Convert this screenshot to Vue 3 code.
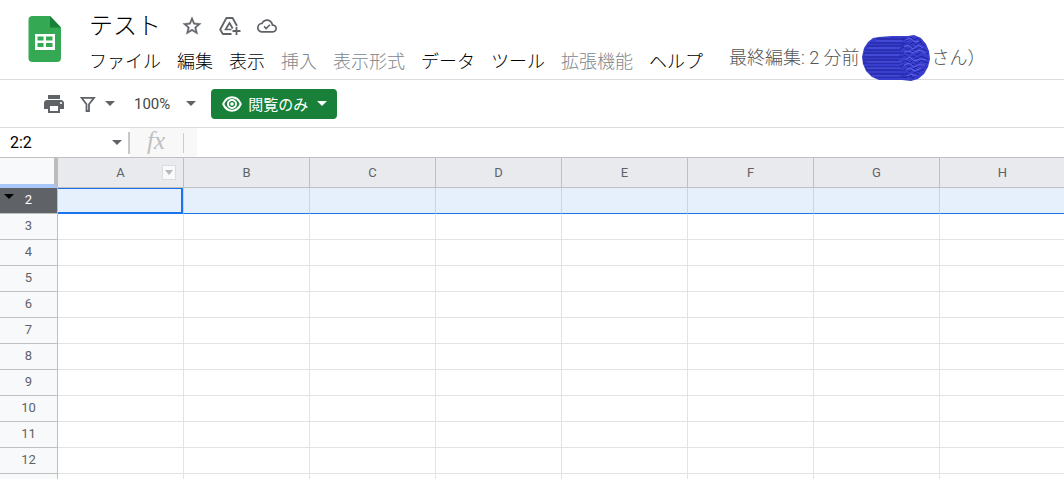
<script setup>
const menus = [
  { label: 'ファイル' },
  { label: '編集' },
  { label: '表示' },
  { label: '挿入', disabled: true },
  { label: '表示形式', disabled: true },
  { label: 'データ' },
  { label: 'ツール' },
  { label: '拡張機能', disabled: true },
  { label: 'ヘルプ' },
]
const columns = ['A', 'B', 'C', 'D', 'E', 'F', 'G', 'H']
const rows = [3, 4, 5, 6, 7, 8, 9, 10, 11, 12, '']
</script>

<template>
  <div class="app">
    <header class="top">
      <a class="logo" href="#" aria-label="Sheets">
        <svg width="34" height="46" viewBox="0 0 34 46">
          <path d="M4.500 0h17.500l11 11.500V42a4 4 0 0 1-4 4H4.500a4 4 0 0 1-4-4V4a4 4 0 0 1 4-4z" fill="#34a853" />
          <path d="M22 0l11 11.500H22z" fill="#188038" />
          <path fill-rule="evenodd" d="M7 18h20v16H7zM9.500 20.500v4h6v-4zm8.500 0v4h6.500v-4zM9.500 27v4h6v-4zm8.500 0v4h6.500v-4z" fill="#fff" />
        </svg>
      </a>
      <div class="head">
        <div class="title-row">
          <h1>テスト</h1>
          <button class="icon" aria-label="star">
            <svg width="22" height="22" viewBox="0 0 24 24"><path fill="#5f6368" stroke="#5f6368" stroke-width=".4" d="M22 9.240l-7.190-.62L12 2 9.190 8.630 2 9.240l5.460 4.730L5.820 21 12 17.270 18.180 21l-1.630-7.030L22 9.240zM12 15.400l-3.760 2.270 1-4.280-3.320-2.880 4.380-.38L12 6.100l1.710 4.040 4.380.38-3.320 2.880 1 4.280L12 15.400z" /></svg>
          </button>
          <button class="icon" aria-label="drive">
            <svg width="22" height="22" viewBox="0 0 22 22" fill="none" stroke="#5f6368" stroke-width="1.800">
              <path d="M12.500 19H3.800L1.200 14.500 7.400 3h6.200l4.400 8" stroke-linejoin="round" />
              <path d="M12.500 14.500H6.600l3.900-6.500 3.200 5.500" stroke-width="1.700" />
              <path d="M17.500 12v8M13.500 16h8" />
            </svg>
          </button>
          <button class="icon" aria-label="cloud">
            <svg width="20" height="20" viewBox="0 0 24 24"><path fill="#5f6368" d="M19.350 10.040C18.670 6.590 15.640 4 12 4 9.110 4 6.600 5.640 5.350 8.040 2.340 8.360 0 10.910 0 14c0 3.310 2.690 6 6 6h13c2.760 0 5-2.240 5-5 0-2.640-2.050-4.780-4.650-4.960zM19 18H6c-2.210 0-4-1.790-4-4 0-2.050 1.530-3.760 3.560-3.970l1.070-.11.5-.95C8.080 7.140 9.940 6 12 6c2.620 0 4.880 1.860 5.390 4.430l.3 1.500 1.530.11c1.560.1 2.780 1.410 2.780 2.960 0 1.650-1.350 3-3 3z" /><path d="M8.500 12.500l2.500 2.500 4.500-4.500" fill="none" stroke="#5f6368" stroke-width="2" /></svg>
          </button>
        </div>
        <div class="menu-row">
          <nav>
            <button v-for="m in menus" :key="m.label" :disabled="m.disabled">{{ m.label }}</button>
          </nav>
          <div class="edited">
            <span>最終編集: 2 分前</span>
            <svg width="68" height="46" viewBox="0 0 68 46">
              <path d="M17 2L30 1 46 1 52 0 59 3 64 9 67 16 68 24 66 32 62 39 56 44 49 46 40 45 17 45 10 42 4 36 1 29 0 22 2 13 6 7 11 3z" fill="#383ecb" />
              <path d="M14 4h28M8 8h34M5 11h36M3 15h36M2 18h38M1 22h38M1 25h36M1 28h38M3 32h37M4 35h36M8 39h34M12 42h32" stroke="#1d209c" />
              <path d="M14 6h26M6 13h32M3 20h34M5 27h34M5 33h34M10 41h28" stroke="#4f54e0" />
              <path d="M40 5l3-2 2 3 4-4 3 3 4-2 3 4M40 10l4-2 3 2 4-3 3 3 4-3 5 4M38 14l4-2 4 3 4-4 3 4 5-3 7 4M40 19l3-3 4 3 4-3 4 4 5-4 6 3M38 23l5-3 3 4 5-3 4 3 4-3 7 3M40 28l3-3 5 3 3-3 4 4 4-4 7 3M38 32l5-3 4 3 4-3 3 4 5-4 5 3M41 36l3-2 4 3 4-4 4 4 6-3M41 40l4-2 4 3 4-4 4 3M43 43l4-2 4 2 3-2" fill="none" stroke="#1f23a6" />
              <path d="M44 5l4-2 5 4 4-1M42 12l4-2 5 4 5-4 5 3M42 17l5-1 4 2 6-3 7 3M43 25l5-3 4 4 6-2 6 1M42 30l5-2 5 4 7-3 4 2M44 35l4-2 5 3 6-3M45 41l4-2 5 2" fill="none" stroke="#6266ec" />
            </svg>
            <span>さん）</span>
          </div>
        </div>
      </div>
    </header>

    <div class="toolbar">
      <button class="icon" aria-label="print">
        <svg width="24" height="24" viewBox="0 0 24 24"><path fill="#5f6368" d="M19 8H5c-1.660 0-3 1.340-3 3v6h4v4h12v-4h4v-6c0-1.660-1.340-3-3-3zm-3 11H8v-5h8v5zm3-7c-.55 0-1-.45-1-1s.45-1 1-1 1 .45 1 1-.45 1-1 1zm-1-9H6v4h12V3z" /></svg>
      </button>
      <button class="filter" aria-label="filter">
        <svg width="16" height="16" viewBox="0 0 16 16"><path d="M1.500 1.800h12.500L9 8.300V15H6.500V8.300z" fill="none" stroke="#5f6368" stroke-width="1.800" /></svg>
        <i class="caret"></i>
      </button>
      <button class="percent">100%<i class="caret"></i></button>
      <button class="view">
        <svg width="20" height="16" viewBox="0 0 20 16" fill="none" stroke="#fff" stroke-width="2">
          <path d="M1.200 8C3 3.800 6.300 1.300 10 1.300S17 3.800 18.800 8C17 12.200 13.700 14.700 10 14.700S3 12.200 1.200 8z" />
          <circle cx="10" cy="8" r="4" /><circle cx="10" cy="8" r="1.800" fill="#fff" stroke="none" />
        </svg>
        <span>閲覧のみ</span><i class="caret"></i>
      </button>
    </div>

    <div class="formula">
      <label class="name"><input value="2:2" aria-label="range" /><i class="caret"></i></label>
      <div class="fx"><span>fx</span></div>
      <input class="value" aria-label="formula" />
    </div>

    <main class="sheet">
      <table>
        <thead>
          <tr>
            <th class="corner"></th>
            <th v-for="c in columns" :key="c" class="col">{{ c }}<button v-if="c === 'A'" class="drop" aria-label="column menu"><i class="caret"></i></button></th>
          </tr>
        </thead>
        <tbody>
          <tr class="selected">
            <th><i class="caret"></i>2</th>
            <td v-for="c in columns" :key="c" :class="{ active: c === 'A' }"></td>
          </tr>
          <tr v-for="r in rows" :key="r">
            <th>{{ r }}</th>
            <td v-for="c in columns" :key="c"></td>
          </tr>
        </tbody>
      </table>
    </main>
  </div>
</template>

<style>
body { margin: 0; overflow: hidden; }
</style>

<style scoped>
* { box-sizing: border-box; }
.app {
  height: 100vh;
  display: flex;
  flex-direction: column;
  background: #fff;
  color: #000;
  font-family: Roboto, "Noto Sans CJK JP", sans-serif;
}
button {
  padding: 0;
  border: 0;
  background: none;
  font: inherit;
  color: inherit;
  white-space: nowrap;
}
svg { display: block; }
input { border: 0; padding: 0; outline: 0; background: none; font: inherit; color: inherit; min-width: 0; }
.caret {
  flex: none;
  width: 0;
  height: 0;
  border: 5px solid transparent;
  border-top-color: #5f6368;
  border-bottom: 0;
}
.top {
  display: flex;
  height: 80px;
  flex: none;
  padding: 10px 0 0 28px;
  gap: 27px;
  border-bottom: 1px solid #dadce0;
}
.logo { padding-top: 6px; }
.head { flex: 1; }
.title-row { display: flex; align-items: center; height: 32px; }
h1 { margin: 0 20px 0 0; font-size: 24px; line-height: 32px; font-weight: 300; }
.icon + .icon { margin-left: 16px; }
.menu-row { display: flex; align-items: center; height: 40px; font-size: 18px; font-weight: 300; }
nav { display: flex; gap: 16px; line-height: 24px; }
nav button:disabled { color: #80868b; }
.edited { display: flex; align-items: center; margin-left: 26px; padding-bottom: 8px; gap: 2px; color: #555; white-space: nowrap; }
.edited span { line-height: 24px; }
.toolbar {
  display: flex;
  flex: none;
  align-items: center;
  height: 48px;
  padding-left: 42px;
  border-bottom: 1px solid #dadce0;
}
.filter { display: flex; align-items: center; gap: 9px; margin-left: 14px; }
.percent { display: flex; align-items: center; gap: 16px; margin-left: 19px; font-size: 15px; color: #444746; }
.view {
  display: flex;
  align-items: center;
  height: 30px;
  margin-left: 15px;
  padding: 0 10px 0 11px;
  gap: 6px;
  border-radius: 4px;
  background: #188038;
  color: #fff;
  font-size: 15px;
}
.view .caret { margin-left: 3px; border-top-color: #fff; }
.formula { display: flex; flex: none; height: 30px; border-bottom: 1px solid #c0c0c0; }
.name { display: flex; align-items: center; width: 130px; padding: 0 8px 0 10px; font-size: 16px; background: linear-gradient(#c8c8c8, #c8c8c8) right center / 2px 22px no-repeat; }
.name input { flex: 1; }
.fx { display: flex; width: 67px; padding-left: 17px; background: linear-gradient(#ccc, #ccc) 53px center / 1px 20px no-repeat #f8f8f8; }
.fx span { font: italic 25px/26px "Liberation Serif", serif; color: #c0c0c0; }
.value { flex: 1; }
.sheet { flex: 1; overflow: hidden; }
table { border-collapse: separate; border-spacing: 0; table-layout: fixed; width: 1066px; }
th, td { height: 26px; padding: 0; border: 0 solid #e2e3e3; border-width: 0 1px 1px 0; }
th {
  padding-bottom: 2px;
  background: #f8f9fa;
  border-color: #c0c0c0;
  color: #5f6368;
  font: 13px/20px Roboto, Arial, sans-serif;
  position: relative;
}
thead th { height: 30px; padding-bottom: 0; }
.col { background: #e8eaed; }
.corner { width: 58px; border-right: 4px solid #bcbcbc; border-bottom: 4px solid #a9c6fb; }
.drop {
  position: absolute;
  right: 7px;
  top: 7px;
  display: grid;
  place-items: center;
  width: 14px;
  height: 15px;
  border: 1px solid #dcdcdc;
  background: #f8f9fa;
}
.drop .caret { border-width: 5px 4px 0; border-top-color: #b7b7b7; }
.selected th { background: #5f6368; color: #fff; }
.selected th .caret { position: absolute; left: 4px; top: 6px; border-top-color: #000; }
.selected td { background: #e6f0fd; border-right-color: #c9d5e4; border-bottom-color: #1a73e8; }
.selected .active { box-shadow: inset -2px -1px #1a73e8, inset 0 1px #1a73e8; }
</style>
